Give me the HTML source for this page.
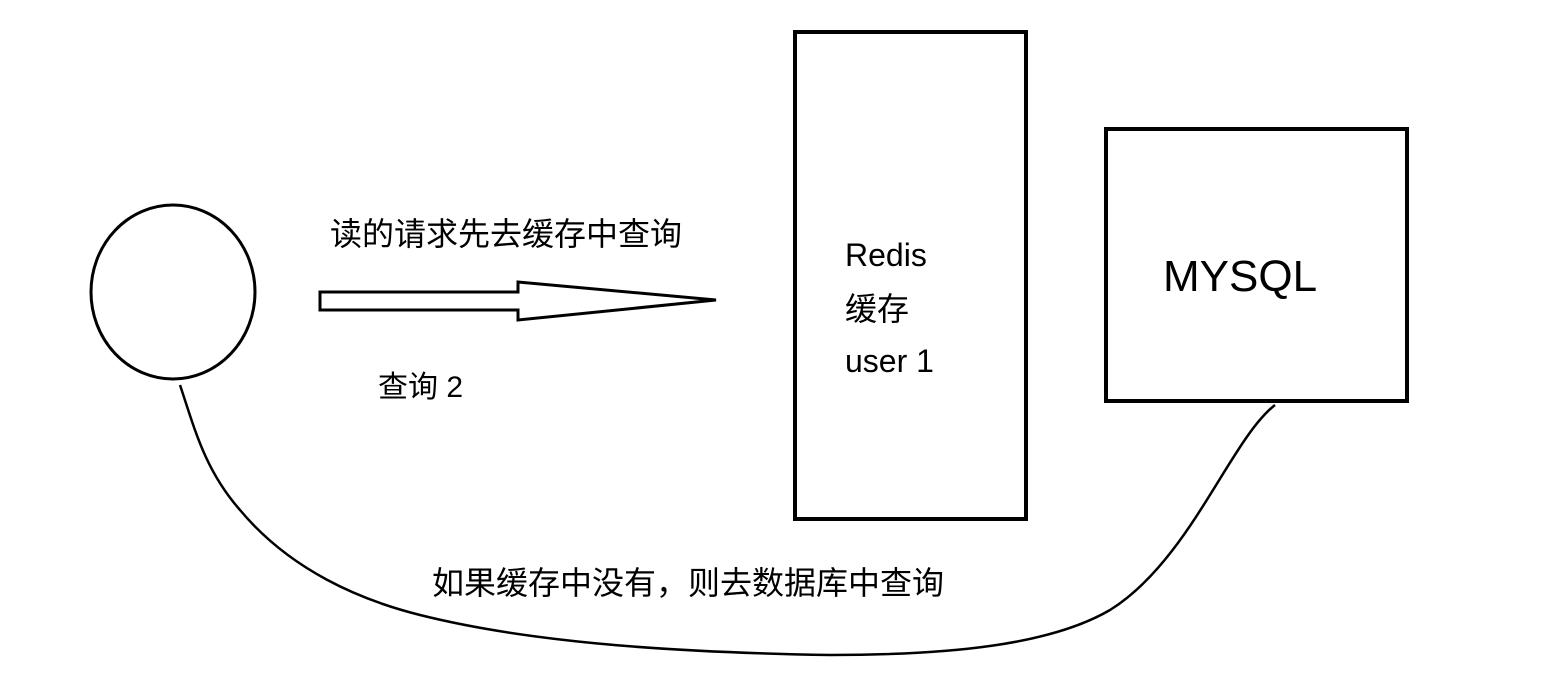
<!DOCTYPE html>
<html><head><meta charset="utf-8"><style>
html,body{margin:0;padding:0;background:#fff;}
svg{display:block;}
text{font-family:"Liberation Sans","Noto Sans CJK SC",sans-serif;fill:#000;}
</style></head><body>
<svg width="1546" height="683" viewBox="0 0 1546 683" xmlns="http://www.w3.org/2000/svg">
<ellipse cx="173" cy="292" rx="82" ry="87" fill="none" stroke="#000" stroke-width="3"/>
<path d="M320 292 L518 292 L518 282 L716 300 L518 320 L518 310 L320 310 Z" fill="none" stroke="#000" stroke-width="3" stroke-linejoin="miter"/>
<text x="330" y="245" font-size="32">读的请求先去缓存中查询</text>
<text x="378" y="397" font-size="30">查询 2</text>
<rect x="795" y="32" width="231" height="487" fill="none" stroke="#000" stroke-width="4"/>
<text x="845" y="266" font-size="32">Redis</text>
<text x="845" y="320" font-size="32">缓存</text>
<text x="845" y="372" font-size="32">user 1</text>
<rect x="1106" y="129" width="301" height="272" fill="none" stroke="#000" stroke-width="4"/>
<text x="1163" y="291" font-size="44">MYSQL</text>
<path d="M180 385 C195 430 205 470 240 510 C290 570 360 600 420 615 C520 640 650 652 830 655 C950 655 1050 645 1110 610 C1190 560 1230 440 1275 405" fill="none" stroke="#000" stroke-width="2.5"/>
<text x="432" y="594" font-size="32">如果缓存中没有，则去数据库中查询</text>
</svg>
</body></html>
